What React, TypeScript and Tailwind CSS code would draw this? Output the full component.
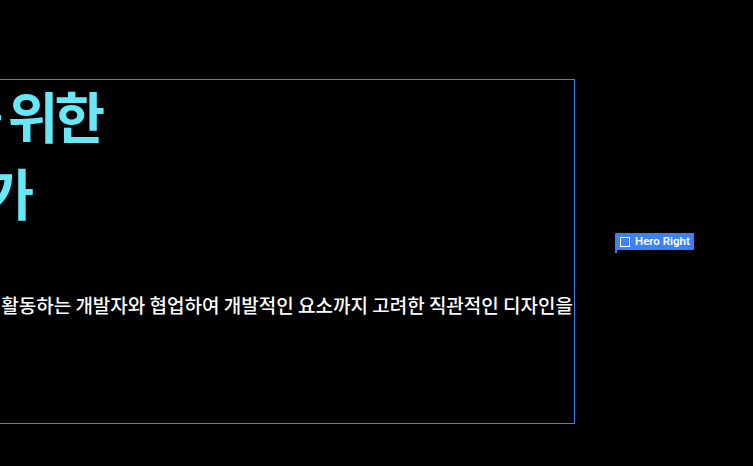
import React from "react"

const App = () => {
  return (
    <div className="h-[466px] w-[753px] overflow-hidden bg-black font-['Noto_Sans_CJK_KR','Noto_Sans',sans-serif]">
      <div className="flex items-start pt-[79px]">
        <section className="ml-[-400px] flex h-[345px] w-[975px] shrink-0 flex-col border border-[#3b82f6] text-left">
          <h1 className="mt-[-4px] flex flex-col items-end whitespace-nowrap text-[55px] font-bold leading-[77px] tracking-[-4px] text-[#67e8f9]">
            <span className="mr-[473px]">모두를 위한</span>
            <span className="mr-[544px]">디자이너가</span>
          </h1>
          <p className="mt-[61px] mr-[1px] whitespace-nowrap text-right text-[19px] font-medium text-white">
            다양한 분야에서 활동하는 개발자와 협업하여 개발적인 요소까지 고려한 직관적인 디자인을
          </p>
        </section>
        <div className="relative ml-[40px] mt-[154px] shrink-0">
          <div className="flex h-[17px] items-center gap-[5px] rounded-[1px] bg-[#3b82f6] pl-[5px] pr-[4px] font-['Roboto',sans-serif] text-[11.5px] font-semibold text-white">
            <span className="size-[10px] border-[1.5px] border-white" />
            <span>Hero Right</span>
          </div>
          <div className="h-[3px] w-[2px] bg-[#3b82f6]" />
        </div>
      </div>
    </div>
  )
}

export default App
